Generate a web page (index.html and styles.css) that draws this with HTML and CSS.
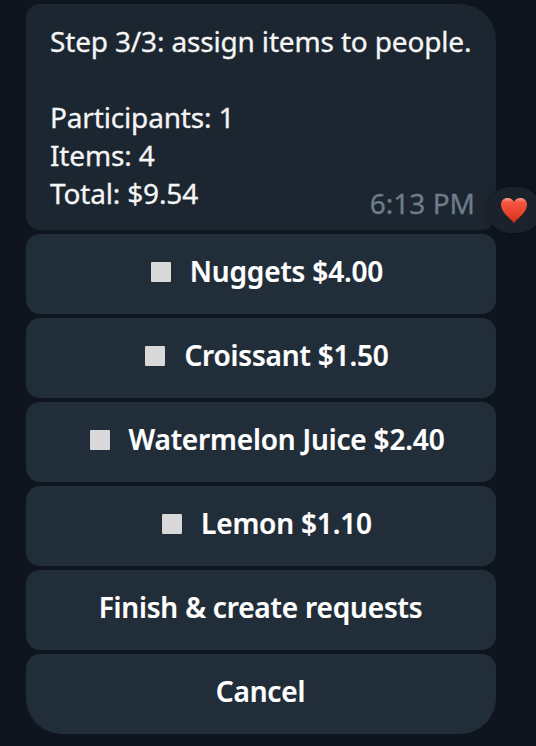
FILE: index.html
```
<!DOCTYPE html>
<html lang="en">
<head>
    <meta charset="UTF-8">
    <meta name="viewport" content="width=device-width, initial-scale=1.0">
    <title>Split the bill</title>
    <link rel="stylesheet" href="styles.css">
</head>
<body>
    <main class="chat">
        <div class="message">
            <p>Step 3/3: assign items to people.</p>
            <br>
            <p>Participants: 1</p>
            <p>Items: 4</p>
            <p>Total: $9.54</p>
            <span class="time">6:13 PM</span>
            <div class="reaction">
                <svg class="heart" viewBox="0 0 26 25">
                    <defs>
                        <linearGradient id="heart-fill" x1="0" y1="0" x2="0" y2="1">
                            <stop offset="0" stop-color="#ff9a84"/>
                            <stop offset="0.18" stop-color="#f2553f"/>
                            <stop offset="0.65" stop-color="#e8402a"/>
                            <stop offset="1" stop-color="#c92a1c"/>
                        </linearGradient>
                    </defs>
                    <path fill="url(#heart-fill)" d="M13 25C9.500 20.500 0 14.500 0 6.500C0 2.500 3 0 6.500 0C9.500 0 12 1.500 13 4C14 1.500 16.500 0 19.500 0C23 0 26 2.500 26 6.500C26 14.500 16.500 20.500 13 25Z"/>
                </svg>
            </div>
        </div>
        <button class="option"><span class="box"></span>Nuggets $4.00</button>
        <button class="option"><span class="box"></span>Croissant $1.50</button>
        <button class="option"><span class="box"></span>Watermelon Juice $2.40</button>
        <button class="option"><span class="box"></span>Lemon $1.10</button>
        <button class="option">Finish &amp; create requests</button>
        <button class="option last">Cancel</button>
    </main>
</body>
</html>
```
FILE: styles.css
```
* {
    box-sizing: border-box;
}
body {
    margin: 0;
    height: 746px;
    overflow: hidden;
    font-family: 'Noto Sans', 'Open Sans', sans-serif;
    background-color: #0e151e;
    color: #f5f5f5;
}
.chat {
    display: flex;
    flex-direction: column;
    gap: 4px;
    width: 470px;
    margin-left: 26px;
    padding-top: 4px;
}
.message {
    position: relative;
    height: 226px;
    padding: 18px 24px;
    border-radius: 14px 36px 14px 14px;
    background-color: #1c2631;
    font-size: 28px;
    line-height: 38px;
    letter-spacing: -0.16px;
    -webkit-text-stroke: 0.3px;
}
.message p {
    margin: 0;
    white-space: nowrap;
}
/* Timestamp sits over the bottom corner of the bubble */
.time {
    position: absolute;
    right: 21px;
    bottom: 8px;
    color: #6f7c8a;
    letter-spacing: 0;
}
.reaction {
    position: absolute;
    left: 461px;
    bottom: -3px;
    display: flex;
    align-items: center;
    justify-content: center;
    width: 54px;
    height: 46px;
    border-radius: 23px;
    background-color: #1b222b;
    box-shadow: 0 0 5px rgba(0, 0, 0, 0.35);
}
.heart {
    width: 26px;
    height: 25px;
}
.option {
    display: flex;
    align-items: center;
    justify-content: center;
    height: 80px;
    padding: 0 1px 6px 0;
    border: 0;
    border-radius: 14px;
    background-color: #212d38;
    color: #fff;
    font: 600 28px 'Noto Sans', 'Open Sans', sans-serif;
    letter-spacing: -0.18px;
    -webkit-text-stroke: 0.2px;
    white-space: nowrap;
}
.box {
    width: 20px;
    height: 20px;
    margin: 2px 19px 0 13px;
    border-radius: 1px;
    background-color: #d9d9d9;
}
.last {
    border-radius: 14px 14px 36px 36px;
}
```
